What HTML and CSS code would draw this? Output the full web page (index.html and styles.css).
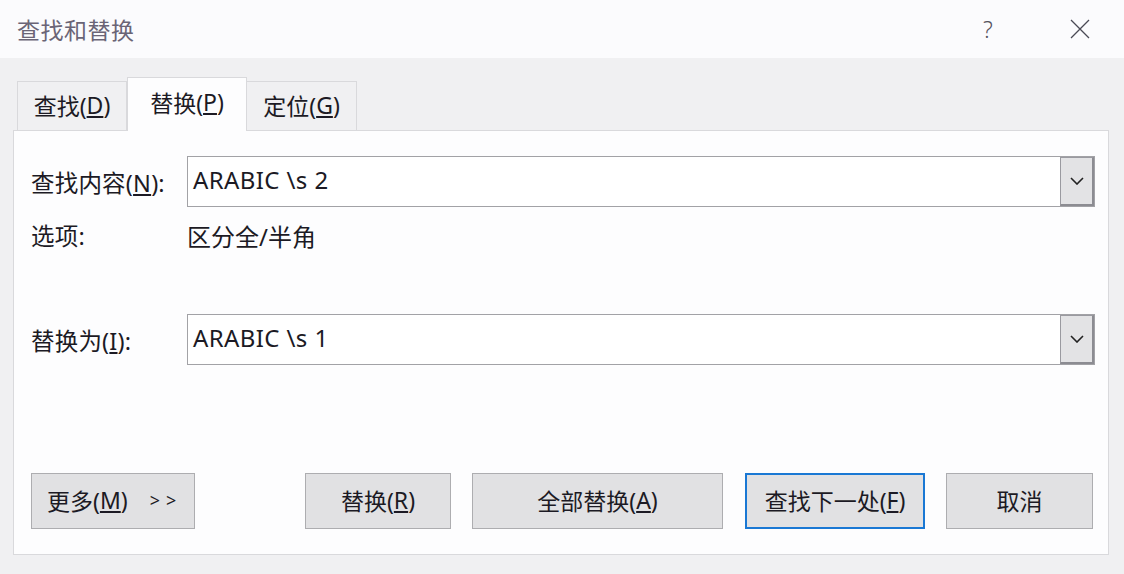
FILE: index.html
```html
<!DOCTYPE html>
<html lang="zh-CN">
<head>
<meta charset="utf-8">
<title>查找和替换</title>
<link rel="stylesheet" href="styles.css">
</head>
<body>
<div class="window">
  <div class="titlebar">
    <div class="title">查找和替换</div>
    <div class="help">?</div>
    <div class="close">
      <svg width="20" height="20" viewBox="0 0 20 20"><path d="M1 1 L19 19 M19 1 L1 19" stroke="#4a4a55" stroke-width="1.3" fill="none"/></svg>
    </div>
  </div>
  <div class="content">
    <div class="tabs">
      <div class="tab">查找(<u>D</u>)</div>
      <div class="tab active">替换(<u>P</u>)</div>
      <div class="tab">定位(<u>G</u>)</div>
    </div>
    <div class="panel">
      <div class="row field-row">
        <div class="label">查找内容(<u>N</u>):</div>
        <div class="combo">
          <div class="combo-text">ARABIC \s 2</div>
          <div class="combo-btn"><svg width="14" height="8" viewBox="0 0 14 8"><path d="M1 1 L7 7 L13 1" stroke="#222" stroke-width="1.6" fill="none"/></svg></div>
        </div>
      </div>
      <div class="row options-row">
        <div class="label">选项:</div>
        <div class="value">区分全/半角</div>
      </div>
      <div class="row field-row replace-row">
        <div class="label">替换为(<u>I</u>):</div>
        <div class="combo">
          <div class="combo-text">ARABIC \s 1</div>
          <div class="combo-btn"><svg width="14" height="8" viewBox="0 0 14 8"><path d="M1 1 L7 7 L13 1" stroke="#222" stroke-width="1.6" fill="none"/></svg></div>
        </div>
      </div>
      <div class="buttons">
        <div class="btn btn-more">更多(<u>M</u>) <span class="arrows">&gt;&gt;</span></div>
        <div class="btn btn-replace">替换(<u>R</u>)</div>
        <div class="btn btn-all">全部替换(<u>A</u>)</div>
        <div class="btn btn-next focused">查找下一处(<u>F</u>)</div>
        <div class="btn btn-cancel">取消</div>
      </div>
    </div>
  </div>
</div>
</body>
</html>
```

FILE: styles.css
```css
* { box-sizing: border-box; }
html, body {
  margin: 0;
  padding: 0;
  width: 1124px;
  height: 574px;
  overflow: hidden;
  background: #f0f0f2;
  font-family: "Noto Sans", "Noto Sans CJK SC", sans-serif;
  color: #1c1a24;
}
.window {
  width: 1124px;
  height: 574px;
  display: flex;
  flex-direction: column;
}
.titlebar {
  height: 58px;
  background: #fbfbfd;
  display: flex;
  align-items: center;
  padding-left: 17px;
}
.title {
  font-size: 23px;
  color: #6a6476;
  flex: 1;
  letter-spacing: 0.5px;
}
.help {
  font-size: 23px;
  color: #55525e;
  width: 20px;
  margin-right: 70px;
  font-family: "Noto Sans", sans-serif;
  font-weight: 300;
  padding-left: 3px;
}
.close {
  width: 20px;
  height: 20px;
  margin-right: 34px;
  display: flex;
}
.content {
  flex: 1;
  padding: 19px 15px 0 13px;
  display: flex;
  flex-direction: column;
}
.tabs {
  display: flex;
  align-items: flex-end;
  padding-left: 4px;
  height: 53px;
  position: relative;
  z-index: 1;
}
.tab {
  width: 110px;
  height: 49px;
  border: 1px solid #d9d9dc;
  border-bottom: none;
  background: #f0f0f2;
  font-size: 23px;
  display: flex;
  align-items: center;
  justify-content: center;
  padding-bottom: 2px;
}
.tab + .tab { border-left: none; }
.tab.active {
  width: 120px;
  height: 54px;
  margin-bottom: -1px;
  background: #fdfdfe;
  border-left: 1px solid #d9d9dc;
  padding-bottom: 5px;
}
.tab.active + .tab { border-left: none; }
.tab u, .label u, .btn u { text-underline-offset: 2px; }
.panel {
  height: 425px;
  background: #fdfdfe;
  border: 1px solid #d9d9dc;
  padding: 25px 13px 0 17px;
  display: flex;
  flex-direction: column;
}
.row {
  display: flex;
  align-items: center;
}
.label {
  width: 156px;
  font-size: 23.5px;
  letter-spacing: 0.2px;
}
.field-row { height: 51px; }
.combo {
  flex: 1;
  height: 51px;
  border: 1px solid #a2a2a6;
  background: #ffffff;
  display: flex;
  align-items: stretch;
}
.combo-text {
  flex: 1;
  font-size: 24px;
  letter-spacing: 0.4px;
  padding-left: 5px;
  display: flex;
  align-items: center;
  padding-bottom: 5px;
}
.combo-btn {
  width: 34px;
  background: #e3e3e5;
  border: 2px solid #8c8c92;
  border-left: 1px solid #9a9aa0;
  border-top: 1px solid #9a9aa0;
  display: flex;
  align-items: center;
  justify-content: center;
}
.options-row {
  margin-top: 14px;
  height: 28px;
}
.value { font-size: 24px; }
.replace-row { margin-top: 65px; }
.buttons {
  margin-top: 108px;
  display: flex;
  padding-right: 2px;
}
.btn {
  height: 56px;
  background: #e1e1e3;
  border: 1px solid #adadb0;
  font-size: 23px;
  display: flex;
  align-items: center;
  justify-content: center;
  padding-bottom: 2px;
}
.btn-more { width: 164px; justify-content: flex-start; padding-left: 15px; }
.arrows { margin-left: 22px; font-size: 18px; letter-spacing: 6px; }
.btn-replace { width: 146px; margin-left: auto; }
.btn-all { width: 251px; margin-left: 21px; }
.btn-next { width: 180px; margin-left: 22px; }
.btn-cancel { width: 147px; margin-left: 21px; }
.btn.focused { border: 2px solid #1a78d4; }
```
